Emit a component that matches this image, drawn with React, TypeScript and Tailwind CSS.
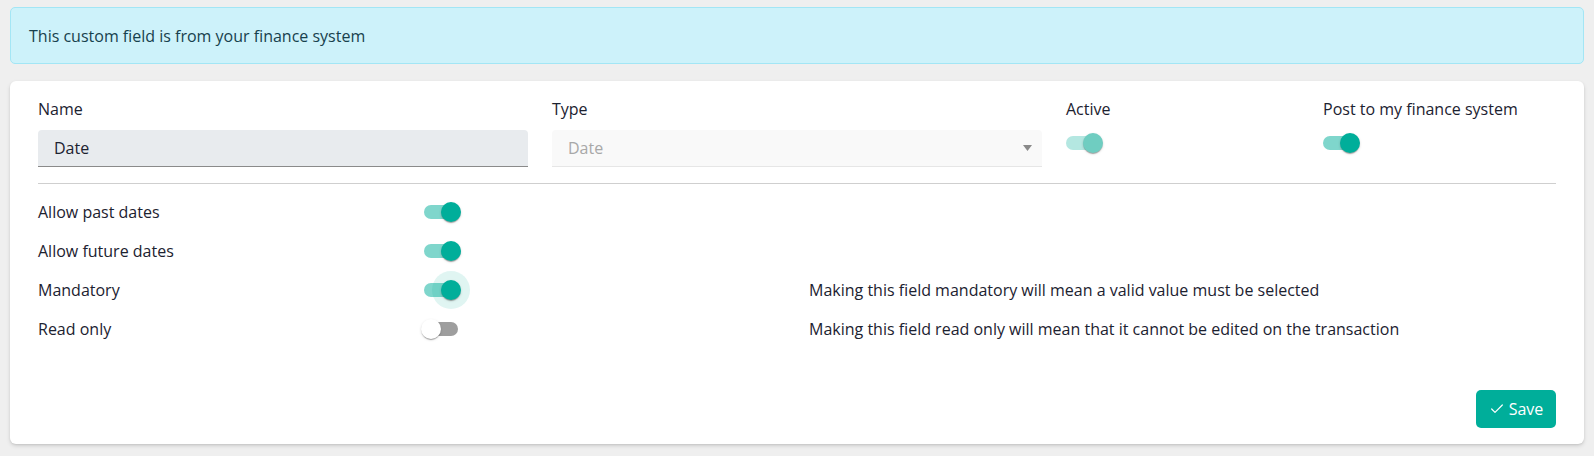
import React from "react";
import { Check } from "lucide-react";

type SwitchProps = {
  on: boolean;
  disabled?: boolean;
  focused?: boolean;
};

function Switch({ on, disabled, focused }: SwitchProps) {
  const track = on
    ? disabled
      ? "bg-[#b4e7e1]"
      : "bg-[#7fd6cc]"
    : "bg-[#9e9e9e]";
  const thumb = on ? (disabled ? "bg-[#6fcdc1]" : "bg-[#00ae9a]") : "bg-white";
  return (
    <div className={`relative w-[34px] h-[14px] rounded-full ${track}`}>
      {focused && (
        <div className="absolute top-[-12px] left-[8px] w-[38px] h-[38px] rounded-full bg-[#00ae9a]/[0.12]" />
      )}
      <div
        className={`absolute top-[-3px] w-5 h-5 rounded-full ${thumb} ${on ? "left-[17px]" : "left-[-3px]"} shadow-[0_2px_1px_-1px_rgba(0,0,0,0.2),0_1px_1px_0_rgba(0,0,0,0.14),0_1px_3px_0_rgba(0,0,0,0.12)]`}
      />
    </div>
  );
}

const rows = [
  { label: "Allow past dates", on: true, note: "" },
  { label: "Allow future dates", on: true, note: "" },
  {
    label: "Mandatory",
    on: true,
    focused: true,
    note: "Making this field mandatory will mean a valid value must be selected",
  },
  {
    label: "Read only",
    on: false,
    note: "Making this field read only will mean that it cannot be edited on the transaction",
  },
];

export default function App() {
  return (
    <div
      className="min-h-screen bg-[#efefef] px-[10px] pt-[7px] text-[16px] leading-5 text-[#1c2230]"
      style={{ fontFamily: "'Open Sans', Lato, sans-serif" }}
    >
      {/* info banner */}
      <div className="h-[57px] flex items-center px-[18px] rounded-[5px] border border-[#a3e6f5] bg-[#cdf2fa] text-[#17414d]">
        This custom field is from your finance system
      </div>

      <div className="mt-[17px] bg-white rounded-[6px] shadow-[0_2px_4px_rgba(0,0,0,0.12),0_1px_2px_rgba(0,0,0,0.08)] px-7 pt-[18px] pb-4">
        <div className="grid grid-cols-12 gap-x-6">
          <div className="col-span-4">
            <div className="h-5">Name</div>
            <div className="mt-[11px] h-[37px] flex items-center px-4 rounded-t-[4px] bg-[#e8ebee] border-b border-[#8a8a8a]">
              Date
            </div>
          </div>
          <div className="col-span-4">
            <div className="h-5">Type</div>
            <div className="mt-[11px] h-[37px] flex items-center justify-between pl-4 pr-[10px] rounded-t-[4px] bg-[#f9f9f9] border-b border-[#e6e6e6] text-[#a8a8a8]">
              <span>Date</span>
              <svg width="9" height="6" viewBox="0 0 9 6">
                <path d="M0 0 L9 0 L4.5 6 Z" fill="#8a8a8a" />
              </svg>
            </div>
          </div>
          <div className="col-span-2">
            <div className="h-5">Active</div>
            <div className="mt-[17px]">
              <Switch on disabled />
            </div>
          </div>
          <div className="col-span-2">
            <div className="h-5">Post to my finance system</div>
            <div className="mt-[17px]">
              <Switch on />
            </div>
          </div>
        </div>

        <div className="mt-4 border-t border-[#cfcfcf]" />

        <div className="mt-[8px]">
          {rows.map((r) => (
            <div key={r.label} className="grid grid-cols-12 gap-x-6 h-[39px] items-center">
              <div className="col-span-3">{r.label}</div>
              <div className="col-span-3">
                <Switch on={r.on} focused={r.focused} />
              </div>
              <div className="col-span-6">{r.note}</div>
            </div>
          ))}
        </div>

        <div className="mt-[42px] flex justify-end">
          <button className="h-[38px] w-[80px] flex items-center justify-center gap-1 rounded-[5px] bg-[#00ae9a] text-white text-[16px]">
            <Check size={16} strokeWidth={1.8} />
            Save
          </button>
        </div>
      </div>
    </div>
  );
}
